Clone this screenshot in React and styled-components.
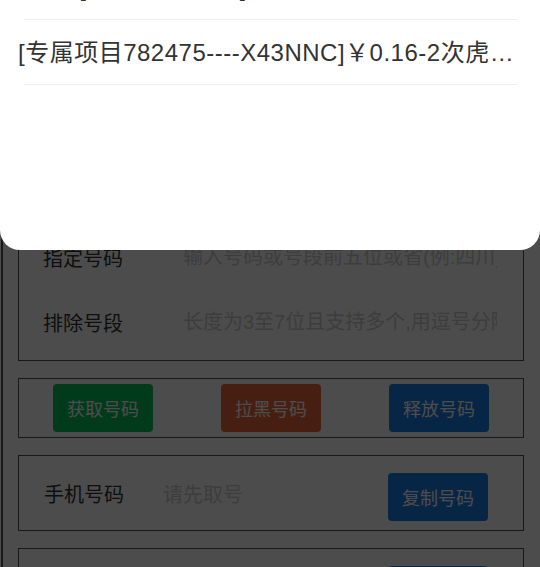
import React from 'react';
import styled, { createGlobalStyle } from 'styled-components';

const COLORS = {
  text: '#333',
  placeholder: '#ccc',
  border: '#555',
  green: '#07c160',
  orange: '#ee6a3c',
  blue: '#1a7ee6',
  divider: '#eeeeee',
};

const GlobalStyle = createGlobalStyle`
  html, body {
    margin: 0;
    padding: 0;
    background: #fff;
    font-family: 'Liberation Sans', 'Noto Sans CJK SC', sans-serif;
  }
  * { box-sizing: border-box; }
`;

const Page = styled.div`
  margin-left: 1px;
  border-left: 2px solid ${COLORS.border};
  padding: 89px 16px 40px 15px;
  display: flex;
  flex-direction: column;
  gap: 17px;
  min-height: 100vh;
`;

const Box = styled.div`
  border: 1px solid ${COLORS.border};
`;

const FieldBox = styled(Box)`
  padding: 5px 26px 5px 24px;
`;

const FieldRow = styled.div`
  display: flex;
  align-items: center;
  height: 65px;
`;

const Label = styled.span`
  width: ${({ $w }) => $w}px;
  flex-shrink: 0;
  font-size: 20px;
  color: ${COLORS.text};
`;

const Input = styled.input`
  flex: 1;
  min-width: 0;
  border: none;
  outline: none;
  background: transparent;
  padding: 0;
  font-size: 20px;
  font-family: inherit;
  color: ${COLORS.text};

  &::placeholder {
    color: ${COLORS.placeholder};
  }
`;

const Value = styled.span`
  flex: 1;
  font-size: 20px;
  color: ${COLORS.placeholder};
`;

const ButtonBar = styled(Box)`
  display: flex;
  justify-content: space-around;
  padding: 5px 0;
`;

const ActionButton = styled.button`
  width: 100px;
  height: 48px;
  border: none;
  border-radius: 4px;
  background: ${({ $bg }) => $bg};
  color: #fff;
  font-size: 18px;
  font-family: inherit;
  flex-shrink: 0;
  margin-top: ${({ $offset }) => $offset || 0}px;
`;

const ResultBox = styled(Box)`
  display: flex;
  align-items: center;
  height: 76px;
  padding: 0 35px 0 25px;
`;

const Overlay = styled.div`
  position: fixed;
  inset: 0;
  background: rgba(0, 0, 0, 0.7);
  z-index: 5;
`;

const Sheet = styled.div`
  position: fixed;
  top: 0;
  left: 0;
  right: 0;
  height: 250px;
  background: #fff;
  border-radius: 0 0 20px 20px;
  overflow: hidden;
  z-index: 10;
`;

const OptionList = styled.div`
  margin-top: ${({ $scroll }) => -$scroll}px;
`;

const Option = styled.div`
  height: 64px;
  line-height: 66px;
  padding: 0 17px 0 18px;
  text-align: center;
  font-size: 24px;
  letter-spacing: 0.5px;
  color: ${COLORS.text};
  white-space: nowrap;
  overflow: hidden;
  text-overflow: ellipsis;
`;

const Divider = styled.div`
  height: 1px;
  margin: 0 23px 0 24px;
  background: ${COLORS.divider};
`;

const projects = [
  '[专属项目6318]￥0.2-多次接收短信',
  '[专属项目782475----X43NNC]￥0.16-2次虎牙直播注册验证',
];

const App = () => (
  <>
    <GlobalStyle />
    <Page>
      <FieldBox>
        <FieldRow>
          <Label $w={140}>选择项目</Label>
          <Input placeholder="请选择项目" readOnly />
        </FieldRow>
        <FieldRow>
          <Label $w={140}>运营商</Label>
          <Input placeholder="不限" readOnly />
        </FieldRow>
        <FieldRow>
          <Label $w={140}>指定号码</Label>
          <Input placeholder="输入号码或号段前五位或省(例:四川)" />
        </FieldRow>
        <FieldRow>
          <Label $w={140}>排除号段</Label>
          <Input placeholder="长度为3至7位且支持多个,用逗号分隔" />
        </FieldRow>
      </FieldBox>

      <ButtonBar>
        <ActionButton $bg={COLORS.green}>获取号码</ActionButton>
        <ActionButton $bg={COLORS.orange}>拉黑号码</ActionButton>
        <ActionButton $bg={COLORS.blue}>释放号码</ActionButton>
      </ButtonBar>

      <ResultBox>
        <Label $w={119}>手机号码</Label>
        <Value>请先取号</Value>
        <ActionButton $bg={COLORS.blue} $offset={8}>复制号码</ActionButton>
      </ResultBox>

      <ResultBox>
        <Label $w={119}>验证码</Label>
        <Value>等待接收</Value>
        <ActionButton $bg={COLORS.blue} $offset={8}>复制短信</ActionButton>
      </ResultBox>
    </Page>

    <Overlay />
    <Sheet>
      <OptionList $scroll={45}>
        {projects.map((p, i) => (
          <React.Fragment key={i}>
            <Option>{p}</Option>
            <Divider />
          </React.Fragment>
        ))}
      </OptionList>
    </Sheet>
  </>
);

export default App;
